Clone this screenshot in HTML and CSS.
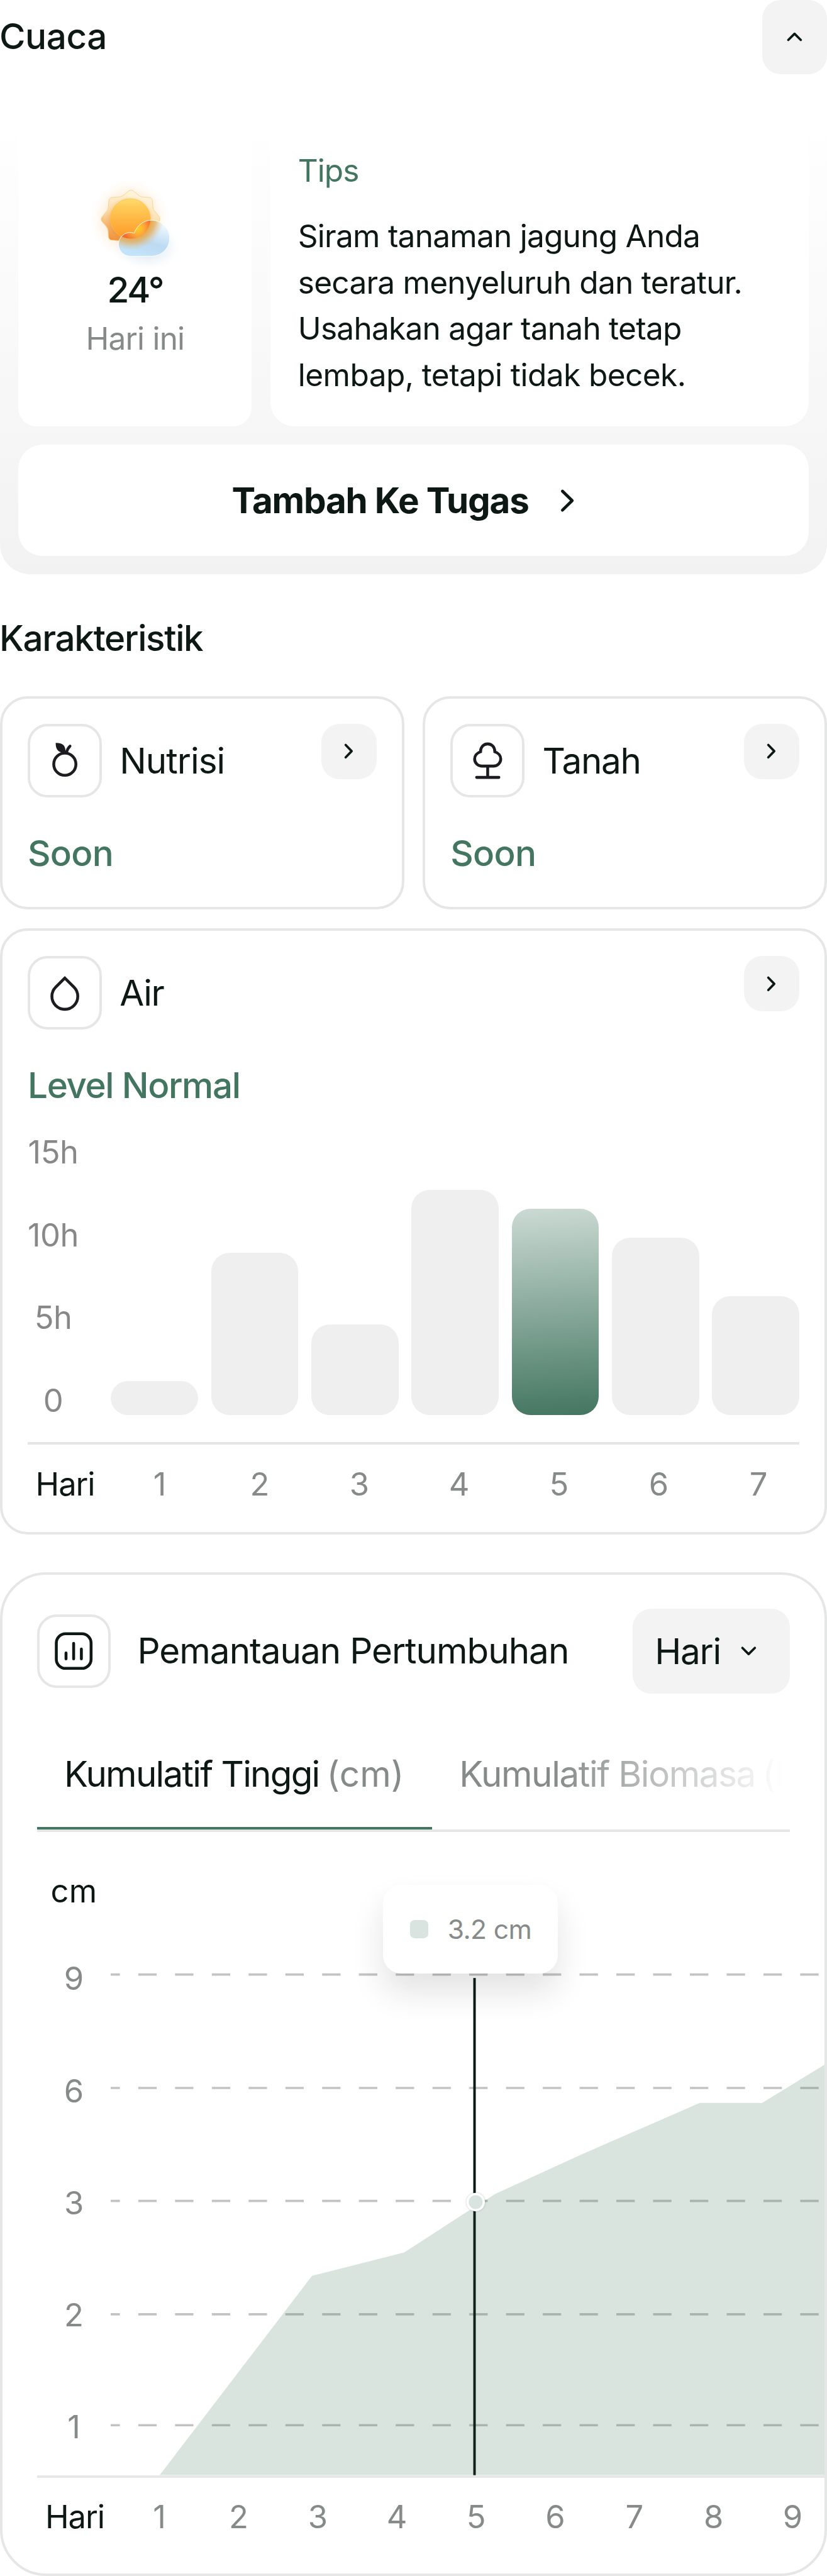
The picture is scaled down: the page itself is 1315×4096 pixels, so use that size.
FILE: index.html
```html
<!DOCTYPE html>
<html lang="id">
<head>
<meta charset="utf-8">
<title>Cuaca dan Karakteristik</title>
<link rel="stylesheet" href="styles.css">
</head>
<body>
<main class="page">
  <header class="section-head">
    <h2 class="title title--cuaca">Cuaca</h2>
    <button class="toggle" aria-label="Tutup">
      <svg class="icon-16" viewBox="0 0 16 16"><path class="stroke" d="M5.3 9.4 8 6.7l2.7 2.7"/></svg>
    </button>
  </header>

  <section class="weather">
    <div class="weather-row">
      <div class="today">
        <svg class="sun" viewBox="0 0 840 840">
          <defs>
            <radialGradient id="glow"><stop offset="0" stop-color="#ffa63d" stop-opacity=".5"/><stop offset=".55" stop-color="#ffb35c" stop-opacity=".25"/><stop offset="1" stop-color="#ffe0b8" stop-opacity="0"/></radialGradient>
            <radialGradient id="mist"><stop offset=".4" stop-color="#a9c8dd" stop-opacity=".3"/><stop offset="1" stop-color="#d8e8f4" stop-opacity="0"/></radialGradient>
            <linearGradient id="rays" x1=".6" y1="0" x2=".3" y2="1"><stop offset="0" stop-color="#fff6e0"/><stop offset=".5" stop-color="#fbdfae"/><stop offset="1" stop-color="#f08f35"/></linearGradient>
            <linearGradient id="disc" x1="0" y1="0" x2="0" y2="1"><stop offset="0" stop-color="#ffdc70"/><stop offset=".2" stop-color="#ffcb58"/><stop offset="1" stop-color="#ff9826"/></linearGradient>
            <radialGradient id="discShade" gradientUnits="userSpaceOnUse" cx="370" cy="415" r="215"><stop offset=".75" stop-color="#e67e22" stop-opacity=".5"/><stop offset="1" stop-color="#f0a048" stop-opacity="0"/></radialGradient>
            <linearGradient id="cloud" x1=".85" y1=".1" x2=".5" y2="1"><stop offset="0" stop-color="#f3faff"/><stop offset=".6" stop-color="#bcdaf2"/><stop offset="1" stop-color="#c3e3fa"/></linearGradient>
            <radialGradient id="refract" gradientUnits="userSpaceOnUse" cx="385" cy="385" r="285"><stop offset=".6" stop-color="#f0a63f"/><stop offset=".75" stop-color="#e3b060" stop-opacity=".8"/><stop offset="1" stop-color="#dcc79c" stop-opacity="0"/></radialGradient>
            <radialGradient id="spot" gradientUnits="userSpaceOnUse" cx="440" cy="480" r="125"><stop offset="0" stop-color="#ffd21c"/><stop offset=".5" stop-color="#fda63a"/><stop offset="1" stop-color="#f4692f"/></radialGradient>
            <clipPath id="cloudClip"><path d="M412 521A103 103 0 1 0 376 721H566A156 156 0 1 0 412 521Z"/></clipPath>
          </defs>
          <circle cx="372" cy="400" r="345" fill="url(#glow)"/>
          <ellipse cx="520" cy="640" rx="300" ry="200" fill="url(#mist)"/>
          <path d="M365 155Q382 142 402 155L455 198Q466 207 480 208L542 213Q568 216 569 245L573 300Q574 315 584 326L625 375Q638 392 628 420L600 560L400 600L275 585L216 581Q190 578 188 550L185 500Q184 480 172 466L130 418Q118 400 130 384L174 330Q184 318 186 300L190 242Q192 214 222 211L288 207Q302 205 315 195Z" fill="url(#rays)" stroke="#f6cd78" stroke-width="4"/>
          <circle cx="370" cy="415" r="215" fill="url(#discShade)" opacity=".6"/>
          <circle cx="378" cy="396" r="173" fill="url(#disc)" stroke="#ffc03f" stroke-width="4"/>
          <path d="M412 521A103 103 0 1 0 376 721H566A156 156 0 1 0 412 521Z" fill="url(#cloud)"/>
          <g clip-path="url(#cloudClip)">
            <circle cx="385" cy="385" r="285" fill="url(#refract)"/>
            <circle cx="378" cy="396" r="173" fill="url(#spot)"/>
          </g>
          <path d="M412 521A103 103 0 1 0 376 721H566A156 156 0 1 0 412 521Z" fill="none" stroke="#fff" stroke-width="5"/>
        </svg>
        <p class="temp">24°</p>
        <p class="today-label">Hari ini</p>
      </div>
      <div class="tips">
        <h3 class="tips-title">Tips</h3>
        <p class="tips-text">Siram tanaman jagung Anda<br>secara menyeluruh dan teratur.<br>Usahakan agar tanah tetap<br><span class="loose">lembap, tetapi tidak becek.</span></p>
      </div>
    </div>
    <button class="task-button">
      <span>Tambah Ke Tugas</span>
      <svg class="icon-24" viewBox="0 0 24 24"><path class="stroke stroke--bold" d="M9.9 7.9 14.1 12l-4.2 4.1"/></svg>
    </button>
  </section>

  <h2 class="title title--section">Karakteristik</h2>

  <div class="traits">
    <article class="card trait">
      <div class="card-head">
        <span class="badge"><svg viewBox="20 20 600 600"><circle cx="320" cy="353" r="96" fill="none" stroke="#1c1b20" stroke-width="25"/><path fill="#1c1b20" d="M241 168C290 166 324 184 325 232L345 260L290 250C255 240 240 215 241 168Z"/><path d="M335 250C340 228 350 210 365 196" fill="none" stroke="#1c1b20" stroke-width="24" stroke-linecap="round"/></svg></span>
        <h3 class="name">Nutrisi</h3>
        <button class="more" aria-label="Buka Nutrisi"><svg class="icon-16" viewBox="0 0 16 16"><path class="stroke" d="M6.7 5.3 9.3 8l-2.6 2.7"/></svg></button>
      </div>
      <p class="status">Soon</p>
    </article>
    <article class="card trait">
      <div class="card-head">
        <span class="badge"><svg viewBox="20 20 600 600"><g fill="none" stroke="#1c1b20" stroke-width="25"><path d="M260 245C260 205 286 177 322 177C358 177 384 205 384 245C416 255 435 280 435 307C435 342 407 369 372 369H272C237 369 209 342 209 307C209 280 228 255 260 245Z"/><path d="M322 369V467"/><path d="M226 467H419" stroke-linecap="round"/></g></svg></span>
        <h3 class="name name--tight">Tanah</h3>
        <button class="more" aria-label="Buka Tanah"><svg class="icon-16" viewBox="0 0 16 16"><path class="stroke" d="M6.7 5.3 9.3 8l-2.6 2.7"/></svg></button>
      </div>
      <p class="status">Soon</p>
    </article>
  </div>

  <article class="card water">
    <div class="card-head">
      <span class="badge"><svg viewBox="20 20 600 600"><path d="M320 190L241 269A112 112 0 1 0 399 269Z" fill="none" stroke="#1c1b20" stroke-width="25"/></svg></span>
      <h3 class="name name--tight">Air</h3>
      <button class="more" aria-label="Buka Air"><svg class="icon-16" viewBox="0 0 16 16"><path class="stroke" d="M6.7 5.3 9.3 8l-2.6 2.7"/></svg></button>
    </div>
    <p class="status status--level">Level Normal</p>
    <div class="bar-chart">
      <div class="hours"><span>15h</span><span>10h</span><span>5h</span><span>0</span></div>
      <div class="bars">
        <i class="bar" style="height:14.6rem"></i>
        <i class="bar" style="height:70.3rem"></i>
        <i class="bar" style="height:39rem"></i>
        <i class="bar" style="height:97.5rem"></i>
        <i class="bar bar--active" style="height:89.1rem"></i>
        <i class="bar" style="height:76.6rem"></i>
        <i class="bar" style="height:51.5rem"></i>
      </div>
    </div>
    <div class="days days--week">
      <b>Hari</b><span>1</span><span>2</span><span>3</span><span>4</span><span>5</span><span>6</span><span>7</span>
    </div>
  </article>

  <article class="card growth">
    <div class="growth-head">
      <span class="badge"><svg viewBox="22 22 600 600"><g fill="none" stroke="#0d1814" stroke-width="25" stroke-linecap="round"><rect x="172" y="173" width="301" height="300" rx="80"/><path d="M256 339V391M322 256V391M389 306V391"/></g></svg></span>
      <h3 class="growth-title">Pemantauan Pertumbuhan</h3>
      <button class="select"><span>Hari</span><svg class="icon-16" viewBox="0 0 16 16"><path class="stroke" d="M5.3 6.6 8 9.3l2.7-2.7"/></svg></button>
    </div>
    <div class="tabs">
      <div class="tab tab--active">Kumulatif Tinggi <span class="unit">(cm)</span></div>
      <div class="tab tab--next">Kumulatif Biomasa <span class="unit-next">(kg)</span></div>
    </div>
    <div class="plot">
      <div class="scale">
        <b>cm</b>
        <div class="ticks"><span>9</span><span>6</span><span>3</span><span>2</span><span>1</span></div>
      </div>
      <svg class="plot-area" viewBox="48 793.2 309 278.4" preserveAspectRatio="none">
        <g fill="none" stroke="#c3c3c3" stroke-width="1" stroke-dasharray="7.96 7.96" stroke-dashoffset="3.98">
          <path d="M48 854.9H357"/><path d="M48 904H357"/><path d="M48 952.9H357"/><path d="M48 1002H357"/><path d="M48 1050H357"/>
        </g>
        <path d="M205.5 856.4V1071.6" stroke="#0d1814" stroke-width="1"/>
        <path d="M69.2 1071.6 135.2 985.3 175.1 975.2 199.3 959.5 214.6 949.8 251.8 932.8 303 910.5H330L357 893.9V1071.6Z" fill="#437660" fill-opacity=".2"/>
        <path d="M205.5 856.4V1071.6" stroke="#0d1814" stroke-width="1" stroke-opacity=".6"/>
        <circle class="marker" cx="206" cy="953.4" r="3.5" fill="#d9e3df" stroke="#fff" stroke-width="1"/>
      </svg>
      <div class="tooltip"><i class="swatch"></i><span>3.2 cm</span></div>
    </div>
    <div class="days days--growth">
      <b>Hari</b><span>1</span><span>2</span><span>3</span><span>4</span><span>5</span><span>6</span><span>7</span><span>8</span><span>9</span>
    </div>
  </article>
</main>
</body>
</html>
```
FILE: styles.css
```css
/* 1rem is one unit of the 358-unit wide layout; --line is a one-unit rule on whole pixels */
html { font-size: 3.6732px; --line: 4px; }
* { box-sizing: border-box; margin: 0; padding: 0; }
body {
  width: 358rem;
  background: #fff;
  color: #0d1814;
  font-family: Inter, "Liberation Sans", sans-serif;
  font-size: 13.5rem;
  line-height: 20rem;
}
button { border: 0; background: none; font: inherit; color: inherit; }
svg { display: block; }
h2, h3, b { font-weight: 400; }
i { display: block; }

.icon-16 { width: 16rem; height: 16rem; }
.icon-24 { width: 24rem; height: 24rem; }
.stroke { fill: none; stroke: #0d1814; stroke-width: 1; stroke-linecap: round; stroke-linejoin: round; }
.stroke--bold { stroke-width: 1.3; }

.page { height: 4096px; overflow: hidden; }

.section-head { display: flex; justify-content: space-between; align-items: center; height: 32rem; }
.title { font-size: 15.4rem; font-weight: 500; }
.title--cuaca { padding-bottom: .8rem; margin-left: -.3rem; letter-spacing: -.1rem; }
.title--section { margin: 17.8rem 0 14.9rem -.3rem; letter-spacing: -.36rem; }
.toggle, .more { display: flex; align-items: center; justify-content: center; border-radius: 8rem; background: #f3f3f3; }
.toggle { width: 28rem; height: 32rem; }

.weather {
  margin-top: 12.6rem;
  padding: 8rem;
  border-radius: 0 0 13rem 13rem;
  background: linear-gradient(#fff 3%, #f2f2f2);
}
.weather-row { display: flex; gap: 8rem; height: 132rem; margin-bottom: 8rem; }
.today {
  display: flex; flex-direction: column; align-items: center;
  width: 101rem; padding-top: 22.4rem;
  border-radius: 8rem; background: #fff;
}
.sun { width: 42rem; height: 42rem; }
.temp { font-size: 15.4rem; font-weight: 500; line-height: 17rem; letter-spacing: -.6rem; }
.today-label { margin-top: 2.8rem; color: #868b89; letter-spacing: -.22rem; }
.tips { flex: 1; padding: 11.4rem 12rem; border-radius: 10.5rem; background: #fff; }
.tips-title { margin-bottom: 8.4rem; font-size: 13.5rem; color: #437660; letter-spacing: -.27rem; }
.tips-text { letter-spacing: -.21rem; white-space: nowrap; }
.loose { letter-spacing: -.16rem; }
.task-button {
  display: flex; align-items: center; justify-content: center; gap: 4.8rem;
  width: 100%; height: 48rem;
  border-radius: 10.5rem; background: #fff;
  font-size: 15.4rem; font-weight: 700; letter-spacing: -.33rem;
}

.card { border: var(--line) solid #e5e7e6; border-radius: 12rem; background: #fff; }
.card-head { display: flex; align-items: center; height: 32rem; }
.badge {
  display: flex; align-items: center; justify-content: center; flex: none;
  width: 32rem; height: 32rem;
  border: var(--line) solid #e5e7e6; border-radius: 8.5rem;
}
.badge svg { flex: none; width: 30rem; height: 30rem; }
.name { margin-left: 7.8rem; font-size: 15.4rem; letter-spacing: -.27rem; }
.name--tight { letter-spacing: -.36rem; }
.more { align-self: flex-start; width: 24rem; height: 24rem; margin-left: auto; }
.status { margin-top: 14rem; font-size: 15.4rem; font-weight: 500; color: #437660; letter-spacing: -.2rem; }
.status--level { letter-spacing: -.38rem; }

.traits { display: grid; grid-template-columns: 1fr 1fr; gap: 8rem; }
.trait { height: 92.5rem; padding: calc(12rem - var(--line)); }

.water { height: 262.5rem; margin-top: 8rem; padding: calc(12rem - var(--line)); }
.bar-chart { display: flex; justify-content: space-between; height: 127.4rem; margin-top: 9rem; }
.hours {
  display: flex; flex-direction: column; align-items: center; justify-content: space-between;
  width: 22rem; color: #888; font-size: 13.8rem; letter-spacing: -.15rem; white-space: nowrap;
}
.bars { display: flex; align-items: flex-end; gap: 5.65rem; width: 298rem; padding-bottom: 3.7rem; }
.bar { flex: 1; border-radius: 8rem; background: #efefef; }
.bar--active { background: linear-gradient(176deg, #cbdad4, #437660); }

.days { display: flex; color: #868b89; font-size: 13.8rem; text-align: center; }
.days b { flex: none; text-align: left; color: #0d1814; letter-spacing: -.3rem; }
.days span { flex: none; }
.days--week { margin-top: 8.1rem; padding-top: 7.1rem; border-top: var(--line) solid #e3e6e4; }
.days--week b { width: 35.6rem; padding-left: 3.4rem; }
.days--week span { width: 43.2rem; }
.days--week span:last-child { margin-right: -5rem; }

.growth { height: 434.5rem; margin-top: 16.2rem; padding: calc(16rem - var(--line)); border-radius: 20rem; overflow: hidden; }
.growth-head { display: flex; align-items: center; }
.growth-title { margin-left: 11.5rem; padding-bottom: .6rem; font-size: 15.4rem; letter-spacing: -.27rem; white-space: nowrap; }
.select {
  display: flex; align-items: center; justify-content: space-between;
  width: 68.2rem; height: 36.6rem; margin-left: auto; padding: 0 10rem 0 9.7rem;
  border-radius: 8rem; background: #f3f3f3;
  font-size: 15.4rem; letter-spacing: -.35rem;
}
.tabs { display: flex; margin-top: 12.4rem; border-bottom: var(--line) solid #e6e6e6; font-size: 15.4rem; line-height: 45.4rem; white-space: nowrap; }
.tab--active { flex: none; width: 171rem; padding-left: 11.8rem; border-bottom: var(--line) solid #437660; letter-spacing: -.48rem; }
.unit { margin-left: -.6rem; color: #868b89; letter-spacing: .05rem; }
.tab--next {
  flex: 1; min-width: 0; padding-left: 11.8rem; overflow: hidden;
  color: #868b89; letter-spacing: -.38rem;
  -webkit-mask-image: linear-gradient(90deg, #000 34%, transparent 98%);
  mask-image: linear-gradient(90deg, #000 34%, transparent 98%);
}
.unit-next { margin-left: -.8rem; letter-spacing: 0; }

.plot { position: relative; display: flex; height: 278.4rem; margin-right: calc(var(--line) - 16rem); }
.scale { flex: none; width: 32rem; padding-top: 15.6rem; text-align: center; font-size: 13.8rem; }
.scale b { display: block; letter-spacing: .1rem; }
.ticks { display: flex; flex-direction: column; justify-content: space-between; height: 214.2rem; margin-top: 17.8rem; color: #868b89; }
.plot-area { flex: none; width: 309rem; height: 278.4rem; }
.marker { filter: drop-shadow(0 .4px .4px rgba(13, 24, 20, .25)); }
.tooltip {
  position: absolute; left: 149.8rem; top: 22.8rem;
  display: flex; align-items: center; gap: 8.4rem;
  width: 75.8rem; height: 38.4rem; padding-left: 11.6rem;
  border-radius: 8rem; background: #fff;
  box-shadow: 0 8rem 14rem rgba(13, 24, 20, .12);
  color: #868b89; font-size: 11.6rem; letter-spacing: -.18rem; white-space: nowrap;
}
.swatch { width: 8rem; height: 8rem; border-radius: 2rem; background: #d9e3df; }
.days--growth { margin-right: -15rem; padding-top: 7rem; border-top: var(--line) solid #e6e7e6; }
.days--growth b { width: 35.9rem; padding-left: 3.6rem; }
.days--growth span { width: 34.27rem; }
```
